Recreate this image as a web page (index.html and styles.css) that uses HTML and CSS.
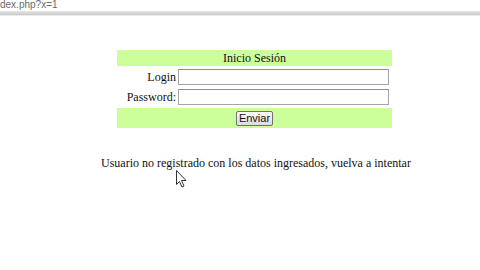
FILE: index.html
```html
<!DOCTYPE html>
<html lang="es">
<head>
    <meta charset="UTF-8">
    <title>Inicio Sesión</title>
    <link rel="stylesheet" href="styles.css">
</head>
<body>
    <div class="address-bar">
        <span class="url">dex.php?x=1</span>
    </div>
    <div class="toolbar-edge"></div>

    <div class="page">
        <form class="login-form" action="#">
            <table class="login-table">
                <tr>
                    <td colspan="2" class="head">Inicio Sesión</td>
                </tr>
                <tr>
                    <td class="label">Login</td>
                    <td><input type="text" class="field"></td>
                </tr>
                <tr>
                    <td class="label">Password:</td>
                    <td><input type="password" class="field"></td>
                </tr>
                <tr>
                    <td colspan="2" class="foot"><button type="button" class="send">Enviar</button></td>
                </tr>
            </table>
        </form>

        <p class="message">Usuario no registrado con los datos ingresados, vuelva a intentar</p>
    </div>

    <svg class="cursor" width="14" height="20" viewBox="0 0 14 20">
        <path d="M1.5 1.5 L1.5 15.5 L4.5 12.5 L7 18 L9 17 L6.5 11.5 L11 11.5 Z" fill="#ffffff" stroke="#333333" stroke-width="1"/>
    </svg>
</body>
</html>
```

FILE: styles.css
```css
body {
    margin: 0;
    background-color: #fff;
    font-family: "Liberation Serif", "Times New Roman", serif;
    font-size: 12px;
    color: #111;
}

.address-bar {
    height: 11px;
    overflow: hidden;
    background-color: #fff;
}

.url {
    display: block;
    font-family: "Liberation Sans", Arial, sans-serif;
    font-size: 10px;
    line-height: 10px;
    color: #6a6a6a;
}

.toolbar-edge {
    height: 4px;
    background: linear-gradient(#e6e6e6, #c9c9c9);
    border-bottom: 1px solid #ececec;
}

.page {
    padding-top: 32px;
}

.login-form {
    margin: 0 0 0 115px;
}

.login-table {
    width: 279px;
    border-spacing: 2px;
}

.login-table td {
    padding: 0;
}

.head {
    background-color: #ccff99;
    text-align: center;
    height: 16px;
    line-height: 16px;
}

.label {
    text-align: right;
    width: 59px;
    padding-right: 1px;
}

.field {
    box-sizing: border-box;
    width: 211px;
    height: 16px;
    margin: 1px 0;
    border: 1px solid #a5a5a5;
    border-top-color: #8e8e8e;
    background-color: #fff;
    display: block;
}

.foot {
    background-color: #ccff99;
    text-align: center;
    height: 20px;
}

.send {
    font-family: "Liberation Sans", Arial, sans-serif;
    font-size: 11px;
    color: #111;
    padding: 0 2px;
    height: 15px;
    line-height: 12px;
    background: linear-gradient(#fafafa, #dcdcdc);
    border: 1px solid #707070;
    border-radius: 2px;
    vertical-align: middle;
}

.message {
    margin: 26px 0 0 101px;
}

.cursor {
    position: absolute;
    left: 175px;
    top: 169px;
    z-index: 10;
    display: block;
}
```
